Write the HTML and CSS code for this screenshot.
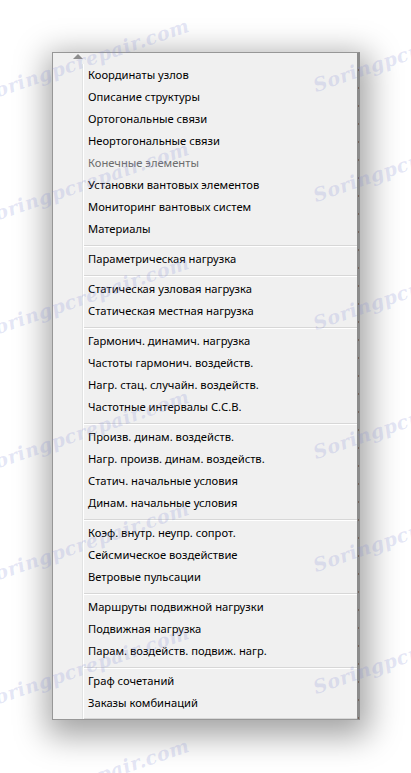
FILE: index.html
```html
<!DOCTYPE html>
<html lang="ru">
<head>
<meta charset="utf-8">
<title>Меню</title>
<link rel="stylesheet" href="styles.css">
</head>
<body>
<div class="page">
  <div class="menu">
    <div class="scroll-up"><span class="arrow"></span></div>
    <div class="items">
      <div class="item">Координаты узлов</div>
      <div class="item">Описание структуры</div>
      <div class="item">Ортогональные связи</div>
      <div class="item">Неортогональные связи</div>
      <div class="item disabled">Конечные элементы</div>
      <div class="item">Установки вантовых элементов</div>
      <div class="item">Мониторинг вантовых систем</div>
      <div class="item">Материалы</div>
      <div class="sep"></div>
      <div class="item">Параметрическая нагрузка</div>
      <div class="sep"></div>
      <div class="item">Статическая узловая нагрузка</div>
      <div class="item">Статическая местная нагрузка</div>
      <div class="sep"></div>
      <div class="item">Гармонич. динамич. нагрузка</div>
      <div class="item">Частоты гармонич. воздейств.</div>
      <div class="item">Нагр. стац. случайн. воздейств.</div>
      <div class="item">Частотные интервалы С.С.В.</div>
      <div class="sep"></div>
      <div class="item">Произв. динам. воздейств.</div>
      <div class="item">Нагр. произв. динам. воздейств.</div>
      <div class="item">Статич. начальные условия</div>
      <div class="item">Динам. начальные условия</div>
      <div class="sep"></div>
      <div class="item">Коэф. внутр. неупр. сопрот.</div>
      <div class="item">Сейсмическое воздействие</div>
      <div class="item">Ветровые пульсации</div>
      <div class="sep"></div>
      <div class="item">Маршруты подвижной нагрузки</div>
      <div class="item">Подвижная нагрузка</div>
      <div class="item">Парам. воздейств. подвиж. нагр.</div>
      <div class="sep"></div>
      <div class="item">Граф сочетаний</div>
      <div class="item">Заказы комбинаций</div>
      <div class="sep last"></div>
    </div>
  </div>

  <div class="wm wm-l1">Soringpcrepair.com</div>
  <div class="wm wm-l2">Soringpcrepair.com</div>
  <div class="wm wm-l3">Soringpcrepair.com</div>
  <div class="wm wm-l4">Soringpcrepair.com</div>
  <div class="wm wm-l5">Soringpcrepair.com</div>
  <div class="wm wm-l6">Soringpcrepair.com</div>
  <div class="wm wm-l7">Soringpcrepair.com</div>
  <div class="wm wm-r1">Soringpcrepair.com</div>
  <div class="wm wm-r2">Soringpcrepair.com</div>
  <div class="wm wm-r3">Soringpcrepair.com</div>
  <div class="wm wm-r4">Soringpcrepair.com</div>
  <div class="wm wm-r5">Soringpcrepair.com</div>
  <div class="wm wm-r6">Soringpcrepair.com</div>
</div>
</body>
</html>
```
FILE: styles.css
```css
html, body {
  margin: 0;
  padding: 0;
  background: #ffffff;
}

.page {
  position: relative;
  width: 411px;
  height: 773px;
  overflow: hidden;
  padding: 52px 0 0 52px;
  box-sizing: border-box;
}

.menu {
  position: relative;
  width: 308px;
  box-sizing: border-box;
  background: #f0f0f0;
  border: 1px solid #979797;
  border-right: 3px solid #8c8c8c;
  box-shadow: 2px 9px 30px 7px rgba(0, 0, 0, 0.36);
  font-family: "Noto Sans", "Open Sans", sans-serif;
  font-size: 11.2px;
  color: #000;
}

.menu::after {
  content: "";
  position: absolute;
  top: 0;
  bottom: 0;
  right: -2px;
  width: 1px;
  background: repeating-linear-gradient(to bottom, transparent 0, transparent 16px, #5a3a2a 16px, #5a3a2a 18px);
  opacity: 0.5;
}

.scroll-up {
  height: 11px;
  padding-left: 20px;
  display: flex;
  align-items: flex-start;
  padding-top: 1px;
  box-sizing: border-box;
}

.arrow {
  width: 0;
  height: 0;
  border-left: 5px solid transparent;
  border-right: 5px solid transparent;
  border-bottom: 5px solid #8d8d8d;
}

.items {
  margin-left: 29px;
  border-left: 1px solid #e2e3e3;
  box-shadow: inset 1px 0 0 #ffffff;
}

.item {
  height: 22px;
  line-height: 22px;
  padding-left: 5px;
  white-space: nowrap;
}

.item.disabled {
  color: #6d6d6d;
}

.sep {
  margin: 5px 0 1px 1px;
  height: 0;
  border-top: 1px solid #d7d7d7;
  border-bottom: 1px solid #ffffff;
}

.sep.last {
  margin: 4px 0 0 1px;
  border-bottom: 0;
}

.wm {
  position: absolute;
  height: 20px;
  line-height: 20px;
  font-family: "DejaVu Serif", serif;
  font-style: italic;
  font-weight: bold;
  font-size: 19px;
  letter-spacing: 0.5px;
  white-space: nowrap;
  color: rgba(120, 130, 210, 0.2);
  transform: rotate(-19deg);
  transform-origin: 0 100%;
  pointer-events: none;
}

.wm-l1 { left: -15px; top: 85px; }
.wm-l2 { left: -15px; top: 208px; }
.wm-l3 { left: -15px; top: 322px; }
.wm-l4 { left: -15px; top: 456px; }
.wm-l5 { left: -15px; top: 568px; }
.wm-l6 { left: -15px; top: 692px; }
.wm-l7 { left: -15px; top: 805px; }
.wm-r1 { left: 317px; top: 75px; }
.wm-r2 { left: 317px; top: 185px; }
.wm-r3 { left: 317px; top: 313px; }
.wm-r4 { left: 317px; top: 442px; }
.wm-r5 { left: 317px; top: 555px; }
.wm-r6 { left: 317px; top: 677px; }
```
